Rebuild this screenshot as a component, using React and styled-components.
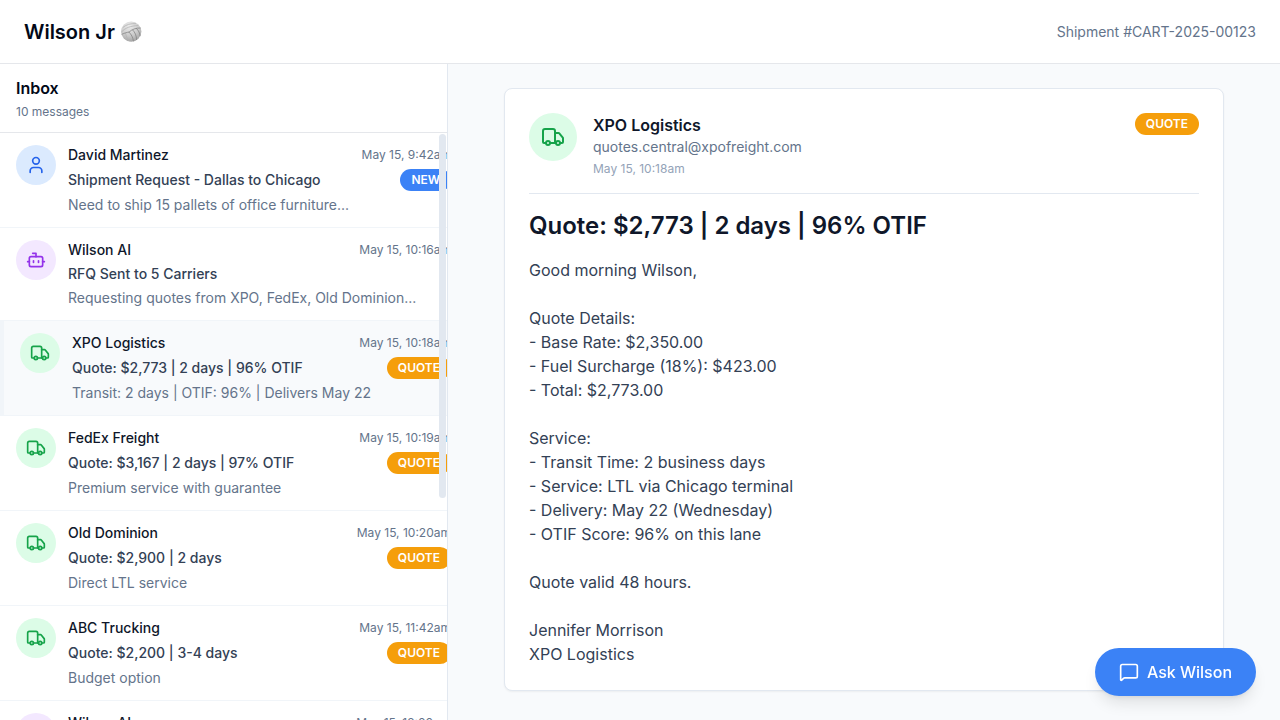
import React from "react";
import styled, { createGlobalStyle, css } from "styled-components";
import { Truck, User, Bot } from "lucide-react";

const GlobalStyle = createGlobalStyle`
  *, *::before, *::after { box-sizing: border-box; }
  html, body { margin: 0; padding: 0; height: 100%; overflow: hidden; }
  body {
    font-family: Inter, "Liberation Sans", sans-serif;
    font-size: 16px;
    line-height: 24px;
    color: #020817;
    background: #ffffff;
    -webkit-font-smoothing: antialiased;
  }
  h1, h2, h3, p { margin: 0; }
  button { font: inherit; border: 0; padding: 0; }
  svg { display: block; flex-shrink: 0; }
`;

const Page = styled.div`
  height: 100vh;
  display: flex;
  flex-direction: column;
  overflow: hidden;
`;

const TopBar = styled.header`
  height: 64px;
  flex: none;
  display: flex;
  align-items: center;
  justify-content: space-between;
  padding: 0 24px;
  border-bottom: 1px solid #e5e7eb;
`;

const Brand = styled.h1`
  display: flex;
  align-items: center;
  gap: 6px;
  font-size: 20px;
  line-height: 28px;
  font-weight: 600;
`;

const ShipmentId = styled.span`
  font-size: 14px;
  line-height: 20px;
  color: #64748b;
`;

const Main = styled.main`
  flex: 1;
  min-height: 0;
  display: flex;
`;

const Sidebar = styled.aside`
  position: relative;
  width: 448px;
  flex: none;
  display: flex;
  flex-direction: column;
  overflow: hidden;
  border-right: 1px solid #e2e8f0;
`;

const InboxHeader = styled.div`
  flex: none;
  height: 69px;
  padding: 12px 16px;
  border-bottom: 1px solid #e5e7eb;
`;

const InboxTitle = styled.h2`
  font-size: 16px;
  line-height: 24px;
  font-weight: 600;
`;

const InboxCount = styled.p`
  margin-top: 4px;
  font-size: 12px;
  line-height: 16px;
  color: #64748b;
`;

const List = styled.div`
  flex: 1;
  min-height: 0;
  overflow: hidden;
`;

const ListInner = styled.div`
  width: 467px;
`;

const Thumb = styled.div`
  position: absolute;
  top: 70px;
  right: 1px;
  width: 7px;
  height: 364px;
  border-radius: 4px;
  background: #e2e8f0;
`;

const Item = styled.div`
  display: flex;
  align-items: flex-start;
  gap: 12px;
  padding: 12px 16px;
  border-bottom: 1px solid #f1f5f9;
  ${(p) =>
    p.$selected &&
    css`
      background: #f8fafc;
      border-left: 4px solid #f1f5f9;
    `}
`;

const tones = {
  user: ["#dbeafe", "#2563eb"],
  bot: ["#f3e8ff", "#9333ea"],
  truck: ["#dcfce7", "#16a34a"],
};

const Avatar = styled.div`
  width: ${(p) => p.$size}px;
  height: ${(p) => p.$size}px;
  flex: none;
  display: flex;
  align-items: center;
  justify-content: center;
  border-radius: 50%;
  background: ${(p) => tones[p.$kind][0]};
  color: ${(p) => tones[p.$kind][1]};
`;

const ItemBody = styled.div`
  flex: 1;
  min-width: 0;
  display: flex;
  flex-direction: column;
  gap: 4px;
`;

const ItemRow = styled.div`
  display: flex;
  align-items: center;
  justify-content: space-between;
  white-space: nowrap;
`;

const Sender = styled.span`
  font-size: 14px;
  line-height: 20px;
  font-weight: 500;
  color: #0f172a;
`;

const Time = styled.span`
  font-size: 12px;
  line-height: 16px;
  color: #64748b;
`;

const Subject = styled.span`
  font-size: 14px;
  line-height: 20px;
  font-weight: 500;
  color: #334155;
`;

const Preview = styled.p`
  font-size: 14px;
  line-height: 20px;
  color: #64748b;
  white-space: nowrap;
`;

const Badge = styled.span`
  flex: none;
  padding: 3px 11px;
  border-radius: 999px;
  background: ${(p) => (p.$label === "NEW" ? "#3b82f6" : "#f59e0b")};
  color: #ffffff;
  font-size: 12px;
  line-height: 16px;
  font-weight: 600;
`;

const Reader = styled.section`
  flex: 1;
  min-width: 0;
  padding: 24px 56px;
  background: #f8fafc;
`;

const Card = styled.article`
  height: 603px;
  padding: 24px;
  border: 1px solid #e2e8f0;
  border-radius: 8px;
  background: #ffffff;
  box-shadow: 0 1px 2px rgba(0, 0, 0, 0.05);
`;

const CardHeader = styled.header`
  display: flex;
  align-items: flex-start;
  gap: 16px;
  padding-bottom: 16px;
  border-bottom: 1px solid #e2e8f0;
`;

const Contact = styled.div`
  flex: 1;
`;

const ContactName = styled.h3`
  font-size: 16px;
  line-height: 24px;
  font-weight: 600;
  color: #0f172a;
`;

const Email = styled.p`
  font-size: 14px;
  line-height: 20px;
  color: #64748b;
`;

const SentAt = styled.p`
  margin-top: 4px;
  font-size: 12px;
  line-height: 16px;
  color: #94a3b8;
`;

const Title = styled.h2`
  margin: 16px 0;
  font-size: 24px;
  line-height: 32px;
  font-weight: 600;
  color: #0f172a;
`;

const MessageText = styled.div`
  font-size: 16px;
  line-height: 24px;
  color: #334155;
  white-space: pre-wrap;
`;

const AskButton = styled.button`
  position: fixed;
  right: 24px;
  bottom: 24px;
  height: 48px;
  display: flex;
  align-items: center;
  gap: 8px;
  padding: 0 24px;
  border-radius: 999px;
  background: #3b82f6;
  color: #ffffff;
  font-size: 16px;
  line-height: 24px;
  font-weight: 500;
  box-shadow: 0 10px 15px -3px rgba(0, 0, 0, 0.1), 0 4px 6px -4px rgba(0, 0, 0, 0.1);
`;

const Volleyball = () => (
  <svg width="21" height="21" viewBox="0 0 21 21" fill="none">
    <defs>
      <radialGradient id="ball" cx="0.42" cy="0.22" r="0.85">
        <stop offset="0" stopColor="#ececec" />
        <stop offset="0.55" stopColor="#cbcbcb" />
        <stop offset="1" stopColor="#9c9c9c" />
      </radialGradient>
    </defs>
    <circle cx="10.2" cy="10.6" r="10.2" fill="url(#ball)" />
    <g strokeLinecap="round" strokeWidth="0.8">
      <g stroke="#b4b4b4">
        <path d="M2.2 6.2C5.2 3.6 9.6 2.4 14.6 2.6" />
        <path d="M0.9 10.6C4.2 6.9 9.6 4.8 16.8 4.6" />
        <path d="M4.5 12.2C5 15 6.4 17.8 8.2 20" />
      </g>
      <g stroke="#858585">
        <path d="M1 13.2C3.6 12 6 11.3 8 11.1C11.2 8.3 15 6.8 19.2 7" />
        <path d="M8 11.1C10.4 13.4 11.9 16.4 12.4 20" />
        <path d="M11.7 9C14 11.2 15.5 14.6 15.6 18.6" />
        <path d="M15.4 7.4C17.6 9.6 18.9 12.2 19.1 14.8" />
      </g>
    </g>
  </svg>
);

const ChatIcon = () => (
  <svg
    width="20"
    height="20"
    viewBox="0 0 24 24"
    fill="none"
    stroke="currentColor"
    strokeWidth="2"
    strokeLinecap="round"
    strokeLinejoin="round"
  >
    <path d="M22 17a2 2 0 0 1-2 2H6.828a2 2 0 0 0-1.414.586l-2.202 2.202A.71.71 0 0 1 2 21.286V5a2 2 0 0 1 2-2h16a2 2 0 0 1 2 2z" />
  </svg>
);

const icons = { user: User, bot: Bot, truck: Truck };

const messages = [
  { kind: "user", from: "David Martinez", time: "May 15, 9:42am", subject: "Shipment Request - Dallas to Chicago", preview: "Need to ship 15 pallets of office furniture...", badge: "NEW" },
  { kind: "bot", from: "Wilson AI", time: "May 15, 10:16am", subject: "RFQ Sent to 5 Carriers", preview: "Requesting quotes from XPO, FedEx, Old Dominion..." },
  { kind: "truck", from: "XPO Logistics", time: "May 15, 10:18am", subject: "Quote: $2,773 | 2 days | 96% OTIF", preview: "Transit: 2 days | OTIF: 96% | Delivers May 22", badge: "QUOTE", selected: true },
  { kind: "truck", from: "FedEx Freight", time: "May 15, 10:19am", subject: "Quote: $3,167 | 2 days | 97% OTIF", preview: "Premium service with guarantee", badge: "QUOTE" },
  { kind: "truck", from: "Old Dominion", time: "May 15, 10:20am", subject: "Quote: $2,900 | 2 days", preview: "Direct LTL service", badge: "QUOTE" },
  { kind: "truck", from: "ABC Trucking", time: "May 15, 11:42am", subject: "Quote: $2,200 | 3-4 days", preview: "Budget option", badge: "QUOTE" },
  { kind: "bot", from: "Wilson AI", time: "May 15, 12:00pm", subject: "Quote Summary", preview: "" },
];

const body = `Good morning Wilson,

Quote Details:
- Base Rate: $2,350.00
- Fuel Surcharge (18%): $423.00
- Total: $2,773.00

Service:
- Transit Time: 2 business days
- Service: LTL via Chicago terminal
- Delivery: May 22 (Wednesday)
- OTIF Score: 96% on this lane

Quote valid 48 hours.

Jennifer Morrison
XPO Logistics`;

function Message({ m }) {
  const Icon = icons[m.kind];
  return (
    <Item $selected={m.selected}>
      <Avatar $size={40} $kind={m.kind}>
        <Icon size={20} />
      </Avatar>
      <ItemBody>
        <ItemRow>
          <Sender>{m.from}</Sender>
          <Time>{m.time}</Time>
        </ItemRow>
        <ItemRow>
          <Subject>{m.subject}</Subject>
          {m.badge && <Badge $label={m.badge}>{m.badge}</Badge>}
        </ItemRow>
        <Preview>{m.preview}</Preview>
      </ItemBody>
    </Item>
  );
}

export default function App() {
  return (
    <Page>
      <GlobalStyle />
      <TopBar>
        <Brand>
          Wilson Jr
          <Volleyball />
        </Brand>
        <ShipmentId>Shipment #CART-2025-00123</ShipmentId>
      </TopBar>
      <Main>
        <Sidebar>
          <InboxHeader>
            <InboxTitle>Inbox</InboxTitle>
            <InboxCount>10 messages</InboxCount>
          </InboxHeader>
          <List>
            <ListInner>
              {messages.map((m, i) => (
                <Message key={i} m={m} />
              ))}
            </ListInner>
          </List>
          <Thumb />
        </Sidebar>
        <Reader>
          <Card>
            <CardHeader>
              <Avatar $size={48} $kind="truck">
                <Truck size={24} />
              </Avatar>
              <Contact>
                <ContactName>XPO Logistics</ContactName>
                <Email>quotes.central@xpofreight.com</Email>
                <SentAt>May 15, 10:18am</SentAt>
              </Contact>
              <Badge $label="QUOTE">QUOTE</Badge>
            </CardHeader>
            <Title>Quote: $2,773 | 2 days | 96% OTIF</Title>
            <MessageText>{body}</MessageText>
          </Card>
        </Reader>
      </Main>
      <AskButton>
        <ChatIcon />
        Ask Wilson
      </AskButton>
    </Page>
  );
}
